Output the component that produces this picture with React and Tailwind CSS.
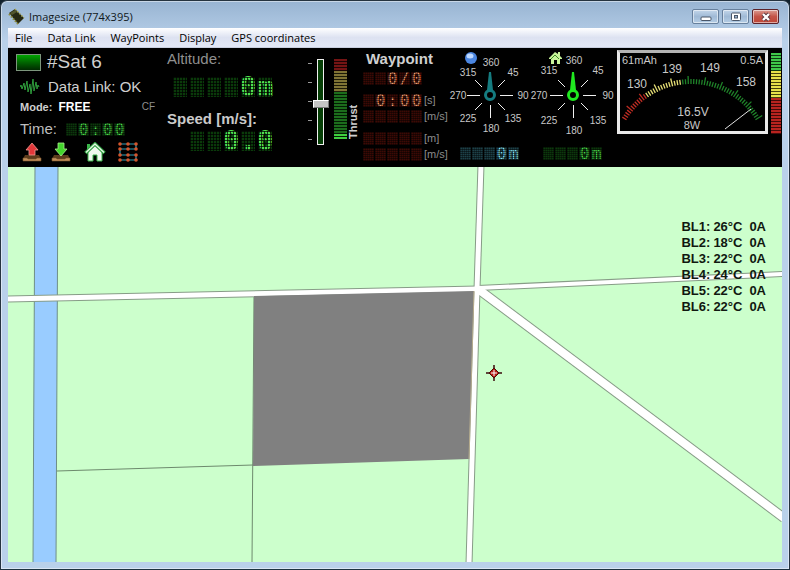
import React, { useState } from 'react';

const menus = ['File', 'Data Link', 'WayPoints', 'Display', 'GPS coordinates'];

const controllers = [
  { id: 'BL1', temp: 26, current: 0 },
  { id: 'BL2', temp: 18, current: 0 },
  { id: 'BL3', temp: 22, current: 0 },
  { id: 'BL4', temp: 24, current: 0 },
  { id: 'BL5', temp: 22, current: 0 },
  { id: 'BL6', temp: 22, current: 0 }
];

const waypointRows = [
  { text: '  0/0', unit: '', gap: 'mb-[9px]' },
  { text: ' 0:00', unit: '[s]', gap: 'mb-[3px]' },
  { text: '     ', unit: '[m/s]', gap: 'mb-[9px]' },
  { text: '     ', unit: '[m]', gap: 'mb-[3px]' },
  { text: '     ', unit: '[m/s]', gap: '' }
];

const tones = {
  green: {
    off: 'bg-[radial-gradient(#0a3a0a_50%,transparent_51%)]',
    on: 'text-[#4fe04f]'
  },
  dimGreen: {
    off: 'bg-[radial-gradient(#0c380c_50%,transparent_51%)]',
    on: 'text-[#48d848]'
  },
  red: {
    off: 'bg-[radial-gradient(#3c0a05_50%,transparent_51%)]',
    on: 'text-[#f09a6c]'
  },
  cyan: {
    off: 'bg-[radial-gradient(#1d4048_50%,transparent_51%)]',
    on: 'text-[#7fe0f4]'
  }
};

// dot matrix readout, one cell per character
function DotDisplay({ text, tone, large }) {
  const t = tones[tone];
  return (
    <div className={large ? 'flex gap-[3px]' : 'flex gap-px'}>
      {text.split('').map((ch, i) => (
        <span
          key={i}
          className={`relative flex justify-center font-['DejaVu_Sans_Mono',monospace] ${t.off} ${t.on} ${
            large
              ? 'h-5 w-[14px] bg-size-[2px_2px] text-[27px] leading-5 font-bold'
              : 'h-[13px] w-[11px] bg-size-[2px_2px] text-[16px] leading-[13px]'
          }`}
        >
          {ch !== ' ' && <span>{ch}</span>}
          <span
            className={`absolute inset-0 ${
              large
                ? 'bg-[linear-gradient(#000b_1px,transparent_1px),linear-gradient(90deg,#000b_1px,transparent_1px)] bg-size-[3px_3px]'
                : 'bg-[linear-gradient(#0007_1px,transparent_1px),linear-gradient(90deg,#0005_1px,transparent_1px)] bg-size-[2px_2px]'
            }`}
          />
        </span>
      ))}
    </div>
  );
}

function ChipIcon() {
  return (
    <svg width="17" height="17" viewBox="0 0 17 17">
      <path d="M1 5 7 1l9 9-6 6Z" fill="#262813" />
      <path d="m2 5 5-3 2 2-5 3Z" fill="#52562e" />
      <path d="m7 1 9 9" stroke="#a9a653" strokeWidth="1.5" strokeDasharray="1.5 1.5" />
      <path d="m1 6 9 10" stroke="#8b8a3b" strokeWidth="2" strokeDasharray="1.5 1.5" />
    </svg>
  );
}

function WindowButton({ label, close, children }) {
  return (
    <button
      aria-label={label}
      className={`flex h-[15px] w-[27px] items-center justify-center rounded-[2px] border shadow-[inset_0_0_0_1px_#ffffff88] ${
        close
          ? 'border-[#5b2229] bg-linear-to-b from-[#d99b92] via-[#c45347] via-50% to-[#bd4636]'
          : 'border-[#67809d] bg-linear-to-b from-[#c3d6ea] via-[#a0bad6] via-50% to-[#b4cde5]'
      }`}
    >
      {children}
    </button>
  );
}

function TitleBar() {
  return (
    <div className="flex h-[27px] items-center pt-1">
      <ChipIcon />
      <h1 className="ml-1 grow font-['Open_Sans',sans-serif] text-[11px] leading-4 text-[#101820]">
        Imagesize (774x395)
      </h1>
      <div className="mr-[3px] flex gap-[3px]">
        <WindowButton label="Minimize">
          <svg width="12" height="10" viewBox="0 0 12 10">
            <rect x="1" y="5" width="10" height="3.5" rx="1" fill="#fff" stroke="#4a5668" />
          </svg>
        </WindowButton>
        <WindowButton label="Maximize">
          <svg width="12" height="10" viewBox="0 0 12 10">
            <rect x="1.5" y="1" width="9" height="7.5" rx="1" fill="#fff" stroke="#4a5668" />
            <rect x="4.5" y="3.5" width="3" height="2.5" fill="#9db5d0" stroke="#4a5668" />
          </svg>
        </WindowButton>
        <WindowButton label="Close" close>
          <svg width="12" height="10" viewBox="0 0 12 10">
            <path d="m3 2 6 6M9 2 3 8" stroke="#53343c" strokeWidth="4" />
            <path d="m3 2 6 6M9 2 3 8" stroke="#fff" strokeWidth="2.4" />
          </svg>
        </WindowButton>
      </div>
    </div>
  );
}

function MenuBar() {
  return (
    <nav className="flex h-5 gap-[15px] border-b border-[#c9cfdf] bg-linear-to-b from-white via-[#dde2f1] via-50% to-[#e3e8f6] px-[7px] font-['Open_Sans',sans-serif] text-[11px] leading-[19px] text-black">
      {menus.map((m) => (
        <button key={m}>{m}</button>
      ))}
    </nav>
  );
}

function TrayIcon({ up }) {
  return (
    <svg width="20" height="20" viewBox="0 0 20 20">
      <path d="M3 13h14l2 4H1Z" fill="#5b3b1c" />
      <path d="M1 16h4l1 1h8l1-1h4v3H1Z" fill="#c08e5a" stroke="#7b542c" strokeWidth=".6" />
      {up ? (
        <path d="m10 1 6 7h-3v5H7V8H4Z" fill="#e2383a" stroke="#f39a92" strokeWidth=".8" />
      ) : (
        <path d="m10 14 6-7h-3V1H7v6H4Z" fill="#43d62c" stroke="#a8f08e" strokeWidth=".8" />
      )}
    </svg>
  );
}

function HomeIcon() {
  return (
    <svg width="22" height="20" viewBox="0 0 22 20">
      <path d="M4 9v10h5v-6h4v6h5V9l-7-6Z" fill="#f0f8ee" stroke="#3bb54a" />
      <path d="M3 2h3v5H3Z" fill="#3bb54a" />
      <path d="M1.5 11 11 2l9.5 9" fill="none" stroke="#2c9e3e" strokeWidth="3.6" />
      <path d="M2 10.5 11 2l9 8.5" fill="none" stroke="#e4f7e2" strokeWidth="1.4" />
    </svg>
  );
}

function RouteIcon() {
  return (
    <svg width="20" height="20" viewBox="0 0 20 20">
      <path d="M2 2h16v5H2v6h16v5H2" fill="none" stroke="#2f9db5" strokeWidth="1.2" />
      {[2, 7, 13, 18].map((y) =>
        [2, 10, 18].map((x) => <circle key={`${x}-${y}`} cx={x} cy={y} r="1.8" fill="#d4552c" />)
      )}
    </svg>
  );
}

function StatusPanel() {
  return (
    <div className="w-[150px] shrink-0 pl-2">
      <div className="mt-[3px] flex h-[22px] items-center gap-[6px] text-[19px] leading-[22px] text-[#d0d0d0]">
        <span className="h-[17px] w-[25px] border border-[#7d967d] bg-linear-to-b from-[#00a400] to-[#002c00]" />
        #Sat 6
      </div>
      <div className="mt-1 flex h-5 items-center gap-2 pl-1 text-[15px] leading-5 text-[#cfcfcf]">
        <svg width="20" height="16" viewBox="0 0 20 16">
          <path
            d="m0 8 1-2 1 4 2-6 1 7 2-9 1 11 2-8 1 10 2-15 1 12 2-9 1 7 1-4 1 2"
            fill="none"
            stroke="#2f9e3c"
          />
        </svg>
        <span>Data Link: OK</span>
      </div>
      <div className="mt-[2px] flex h-4 items-center pl-1 text-[11px] font-bold leading-4 text-[#cfcfcf]">
        Mode:
        <span className="ml-[6px] grow text-[12px] text-white">FREE</span>
        <span className="mr-[3px] text-[10px] font-normal text-[#8d8d8d]">CF</span>
      </div>
      <div className="mt-1 flex h-5 items-center justify-between pl-1 pr-[33px] text-[15px] leading-5 text-[#bdbdbd]">
        Time:
        <DotDisplay text=" 0:00" tone="dimGreen" />
      </div>
      <div className="mt-[3px] flex h-5 pl-[6px]">
        <button aria-label="Upload" className="mr-[9px]">
          <TrayIcon up />
        </button>
        <button aria-label="Download" className="mr-[13px]">
          <TrayIcon />
        </button>
        <button aria-label="Home" className="mr-3">
          <HomeIcon />
        </button>
        <button aria-label="Route">
          <RouteIcon />
        </button>
      </div>
    </div>
  );
}

function FlightPanel() {
  return (
    <div className="flex w-[114px] shrink-0 flex-col pl-[9px] text-[15px] leading-5">
      <p className="mt-[1px] text-[#8f8f8f]">Altitude:</p>
      <div className="mt-2 flex justify-end">
        <DotDisplay text="    0m" tone="green" large />
      </div>
      <p className="mt-3 font-bold whitespace-nowrap text-[#cacaca]">Speed [m/s]:</p>
      <div className="mt-[2px] flex justify-end">
        <DotDisplay text="  0.0" tone="green" large />
      </div>
    </div>
  );
}

function ThrustPanel() {
  const [thrust, setThrust] = useState(48);

  return (
    <div className="ml-9 flex shrink-0 pt-[11px]">
      <div className="mt-1 mr-px flex h-[77px] w-1 flex-col justify-between">
        {[0, 1, 2, 3, 4].map((n) => (
          <i key={n} className="h-px bg-[#9a9a9a]" />
        ))}
      </div>
      <input
        id="thrust"
        type="range"
        value={thrust}
        onChange={(e) => setThrust(Number(e.target.value))}
        className="h-[86px] w-4 appearance-none bg-transparent [direction:rtl] [writing-mode:vertical-lr] [&::-webkit-slider-runnable-track]:h-full [&::-webkit-slider-runnable-track]:bg-[linear-gradient(#f0f0f0,#f0f0f0),linear-gradient(#f0f0f0,#f0f0f0),linear-gradient(90deg,transparent_4px,#f0f0f0_4px,#f0f0f0_5px,#063f06_5px,#063f06_10px,#f0f0f0_10px,#f0f0f0_11px,transparent_11px)] [&::-webkit-slider-runnable-track]:bg-size-[7px_1px,7px_1px,100%_100%] [&::-webkit-slider-runnable-track]:bg-position-[4px_0,4px_100%,0_0] [&::-webkit-slider-runnable-track]:bg-no-repeat [&::-webkit-slider-thumb]:h-[8px] [&::-webkit-slider-thumb]:w-4 [&::-webkit-slider-thumb]:appearance-none [&::-webkit-slider-thumb]:border [&::-webkit-slider-thumb]:border-white [&::-webkit-slider-thumb]:border-r-[#777] [&::-webkit-slider-thumb]:border-b-[#777] [&::-webkit-slider-thumb]:bg-[#c4c4c4]"
      />
      <div className="ml-[5px] flex h-20 w-[13px] flex-col">
        <div className="h-[12px] bg-[repeating-linear-gradient(#741414_0_2px,#1c0404_2px_3px)]" />
        <div className="h-[21px] bg-[repeating-linear-gradient(#7f7435_0_2px,#1c1a08_2px_3px)]" />
        <div className="h-[42px] bg-[repeating-linear-gradient(#1c6d1c_0_2px,#041c04_2px_3px)]" />
        <div className="h-[5px] bg-[repeating-linear-gradient(#3fd03f_0_2px,#041c04_2px_3px)]" />
      </div>
      <label
        htmlFor="thrust"
        className="h-20 w-3 rotate-180 text-[11px] font-bold leading-3 text-[#cfcfcf] [writing-mode:vertical-rl]"
      >
        Thrust
      </label>
    </div>
  );
}

function WaypointPanel() {
  return (
    <div className="w-[89px] shrink-0 pl-1">
      <h2 className="mt-[1px] mb-[3px] pl-[3px] text-[15px] font-bold leading-5 text-[#d0d0d0]">Waypoint</h2>
      {waypointRows.map((row, i) => (
        <div key={i} className={`flex h-[13px] items-center gap-[2px] text-[11px] leading-[13px] text-[#8c8c8c] ${row.gap}`}>
          <DotDisplay text={row.text} tone="red" />
          {row.unit}
        </div>
      ))}
    </div>
  );
}

function Compass({ color, reach, tone, children }) {
  const d = reach - 10;
  const labels = [
    ['360', 1, -reach],
    ['45', d, -d],
    ['90', reach, 0],
    ['135', d, d],
    ['180', 1, reach],
    ['225', -d + 1, d],
    ['270', -reach + 1, 0],
    ['315', -d + 1, -d]
  ];
  return (
    <div className="flex w-[83px] shrink-0 flex-col items-center">
      <svg width="83" height="98" viewBox="-42 -47 83 98" className="overflow-visible">
        {labels.map(([text, x, y]) => (
          <text key={text} x={x} y={y + 4} textAnchor="middle" fontSize="10" fill="#c8c8c8">
            {text}
          </text>
        ))}
        <path
          d="M-23 .5H-10M10 .5H23M.5 10V23M-15-15-8-8M8-8 15-15M-15 15-8 8M8 8 15 15"
          stroke="#f0f0f0"
        />
        <path d="M-1-23H1L3-5H-3Z" fill={color} />
        <circle r="4.5" fill="#000" stroke={color} strokeWidth="3" />
        {children}
      </svg>
      <div className="mt-[1px]">
        <DotDisplay text="   0m" tone={tone} />
      </div>
    </div>
  );
}

function PowerGauge() {
  const ticks = [];
  for (let n = 0; n <= 58; n++) {
    const a = -58 + n * 2;
    ticks.push({
      a,
      long: n % 6 === 4,
      color: a < -35 ? '#c22d24' : a < -7 ? '#e6df75' : '#1f8229'
    });
  }
  return (
    <div className="mt-[2px] ml-[3px] h-[84px] w-[151px] shrink-0 border-3 border-[#e9e9e9] border-t-[#b4b4b4]">
      <svg width="145" height="78" viewBox="620 53 145 78" fill="#c8c8c8">
        {ticks.map((t) => (
          <path
            key={t.a}
            d={t.long ? 'M691 84V76' : 'M691 84V79'}
            transform={`rotate(${t.a} 691 160)`}
            stroke={t.color}
            strokeWidth="1.3"
          />
        ))}
        <path d="m725 129 26-20" stroke="#e4e4e4" />
        <g fontSize="12" textAnchor="middle">
          <text x="637" y="88">130</text>
          <text x="672" y="73">139</text>
          <text x="710" y="72">149</text>
          <text x="746" y="86">158</text>
          <text x="693" y="116">16.5V</text>
        </g>
        <g fontSize="11">
          <text x="622" y="64">61mAh</text>
          <text x="763" y="64" textAnchor="end">0.5A</text>
          <text x="692" y="129" textAnchor="middle">8W</text>
        </g>
      </svg>
    </div>
  );
}

function InstrumentPanel() {
  return (
    <header className="flex h-[119px] shrink-0 overflow-hidden bg-black font-['Liberation_Sans',sans-serif]">
      <StatusPanel />
      <FlightPanel />
      <ThrustPanel />
      <WaypointPanel />
      <Compass color="#157c80" reach={33} tone="cyan">
        <circle cx="-19" cy="-37" r="6" fill="#4b86e0" />
        <ellipse cx="-20" cy="-39" rx="3.5" ry="2.5" fill="#bcd8ff" />
      </Compass>
      <Compass color="#1fe81f" reach={35} tone="dimGreen">
        <path d="M-18-43-24-37V-36H-22V-31H-19V-35H-16V-31H-13V-36H-11V-37L-13-39V-43H-15V-41Z" fill="#c8f59a" />
        <path d="m-22-36 4-4 4 4" fill="none" stroke="#3d8a22" />
      </Compass>
      <PowerGauge />
      <div className="mt-[5px] mr-px ml-auto flex h-[81px] w-[10px] flex-col">
        <div className="h-[18px] bg-[repeating-linear-gradient(#3fc84a_0_2px,#0d3a10_2px_3px)]" />
        <div className="h-[27px] bg-[repeating-linear-gradient(#e6e04a_0_2px,#45400c_2px_3px)]" />
        <div className="h-[36px] bg-[repeating-linear-gradient(#b8231f_0_2px,#420a08_2px_3px)]" />
      </div>
    </header>
  );
}

function MapView() {
  const roads = [
    { d: 'M473-2 469 122', w: 5 },
    { d: 'M469 122 461 397', w: 5 },
    { d: 'M-2 132 470 122', w: 5 },
    { d: 'M470 121 776 107', w: 4 },
    { d: 'M470 122 776 351', w: 8 }
  ];
  return (
    <main className="relative grow overflow-hidden bg-[#ccffcc]">
      <svg
        viewBox="0 0 774 395"
        preserveAspectRatio="xMinYMin slice"
        className="absolute inset-0 size-full"
        fill="none"
      >
        <path d="M27-1H50L48 396H25Z" fill="#99ccff" stroke="#6f8f86" />
        <path d="M49 304 245 298M246 128 244 396" stroke="#6d8a6d" />
        {roads.map((r) => (
          <path key={r.d} d={r.d} stroke="#879c87" strokeWidth={r.w + 2} />
        ))}
        {roads.map((r) => (
          <path key={r.d} d={r.d} stroke="#fff" strokeWidth={r.w} />
        ))}
        <path d="M246 129 466 124 461 292 245 299Z" fill="#808080" />
        <path d="M466 124 461 292" stroke="#b8ad8e" />
        <g transform="translate(486 206)">
          <path d="M0-8V8M-8 0H8" stroke="#3a0a0a" strokeWidth="1.5" />
          <path d="M0-5 5 0 0 5-5 0Z" fill="#b51a12" stroke="#4a0c08" />
          <path d="M0-3V3M-3 0H3" stroke="#fff" />
        </g>
      </svg>
      <table className="absolute top-[52px] right-4 font-['Liberation_Sans',sans-serif] text-[13px] font-bold leading-4 text-[#101810]">
        <tbody>
          {controllers.map((c) => (
            <tr key={c.id}>
              <th className="w-8 text-left">{c.id}:</th>
              <td className="w-9">{c.temp}°C</td>
              <td>{c.current}A</td>
            </tr>
          ))}
        </tbody>
      </table>
    </main>
  );
}

export default function App() {
  return (
    <div className="min-h-screen bg-[#10202c]">
      <div className="flex min-h-screen flex-col rounded-t-[7px] border border-[#25333f] border-b-[#1c3340] bg-[#bcd2ea] bg-linear-to-b from-[#98b4d2] to-[#b9d1ea] to-[40px] px-[7px] pb-[7px] shadow-[inset_0_0_0_1px_#ffffff77]">
        <TitleBar />
        <MenuBar />
        <InstrumentPanel />
        <MapView />
      </div>
    </div>
  );
}
